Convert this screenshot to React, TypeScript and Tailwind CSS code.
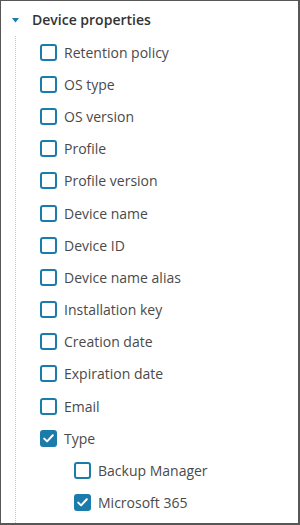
const items: { label: string; checked?: boolean; level?: number }[] = [
  { label: "Retention policy" },
  { label: "OS type" },
  { label: "OS version" },
  { label: "Profile" },
  { label: "Profile version" },
  { label: "Device name" },
  { label: "Device ID" },
  { label: "Device name alias" },
  { label: "Installation key" },
  { label: "Creation date" },
  { label: "Expiration date" },
  { label: "Email" },
  { label: "Type", checked: true },
  { label: "Backup Manager", level: 1 },
  { label: "Microsoft 365", checked: true, level: 1 },
];

function Checkbox({ checked }: { checked?: boolean }) {
  if (checked) {
    return (
      <span className="w-[17px] h-[17px] rounded-[3px] bg-[#1b7cab] flex items-center justify-center flex-shrink-0">
        <svg width="11" height="9" viewBox="0 0 11 9" fill="none">
          <path d="M1.2 4.6 L4.1 7.4 L9.8 1.3" stroke="white" strokeWidth="2" strokeLinecap="round" strokeLinejoin="round" />
        </svg>
      </span>
    );
  }
  return <span className="w-[17px] h-[17px] rounded-[3px] border-2 border-[#1b7cab] bg-white flex-shrink-0" />;
}

export default function App() {
  return (
    <div
      className="w-[300px] h-[525px] bg-white border-l border-t border-r-2 border-b-2 border-[#575757] overflow-hidden flex flex-col"
      style={{ fontFamily: '"Open Sans", "Liberation Sans", sans-serif' }}
    >
      <div className="h-[35px] flex items-center pl-[11px] flex-shrink-0">
        <svg width="7" height="5" viewBox="0 0 7 5" className="mt-[3px]">
          <path d="M0 0 L7 0 L3.5 4.5 Z" fill="#1b7cab" />
        </svg>
        <span className="ml-[13px] mt-[2px] text-[14px] font-semibold text-[#333]">Device properties</span>
      </div>
      <div className="flex-1 ml-[14px] border-l border-dotted border-[#c4c4c4]">
        {items.map((item) => (
          <div
            key={item.label}
            className={`h-[32.2px] flex items-center gap-[7px] ${item.level ? "pl-[58px]" : "pl-[24px]"}`}
          >
            <Checkbox checked={item.checked} />
            <span className="text-[14px] text-[#4a4a4a]">{item.label}</span>
          </div>
        ))}
      </div>
    </div>
  );
}
